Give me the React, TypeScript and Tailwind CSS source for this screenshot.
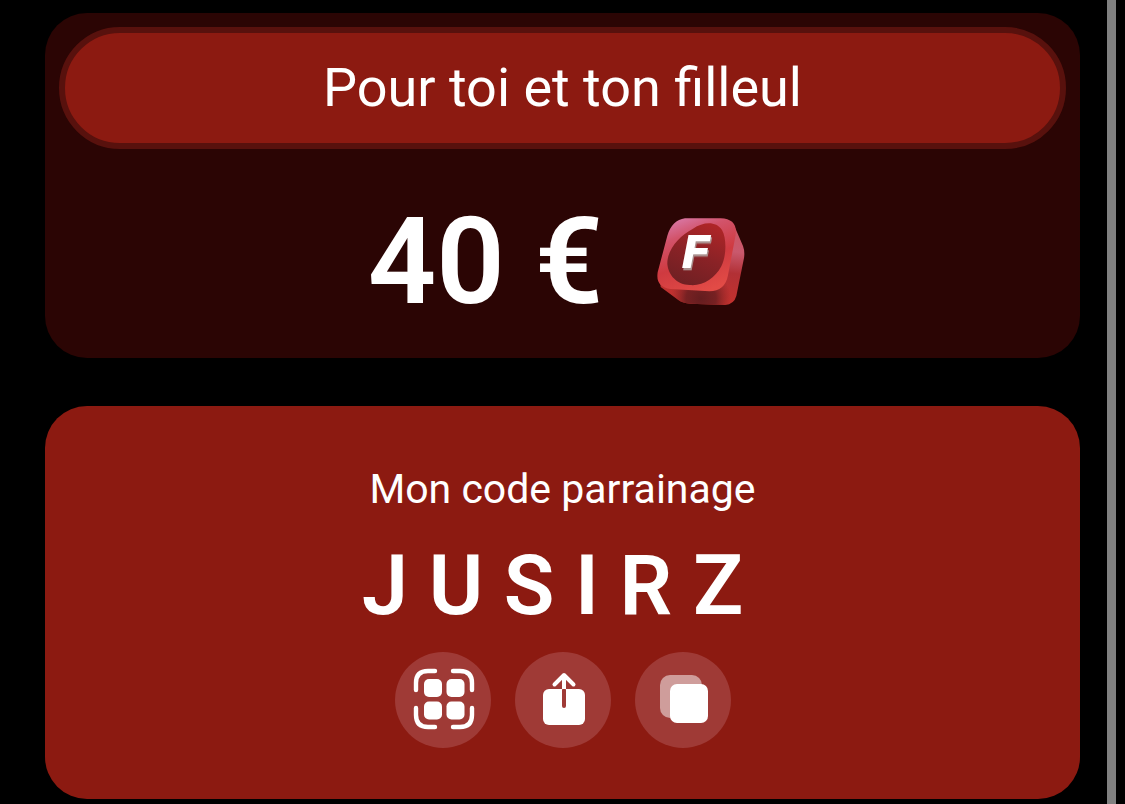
import { useState } from "react";

const CODE = "J U S I R Z";

function CoinCube() {
  return (
    <svg viewBox="53 50 264 264" className="size-[88px] shrink-0" aria-hidden="true">
      <defs>
        <linearGradient id="face" x1="0.2" y1="0" x2="0.6" y2="1">
          <stop offset="0" stopColor="#d97bab" />
          <stop offset="0.25" stopColor="#d2536a" />
          <stop offset="0.6" stopColor="#cf3a40" />
          <stop offset="1" stopColor="#e24b46" />
        </linearGradient>
        <linearGradient id="body" x1="0.6" y1="0" x2="0.5" y2="1">
          <stop offset="0" stopColor="#cf5460" />
          <stop offset="0.35" stopColor="#c9596d" />
          <stop offset="0.6" stopColor="#b23035" />
          <stop offset="1" stopColor="#c5322d" />
        </linearGradient>
        <radialGradient id="shade" gradientUnits="userSpaceOnUse" cx="185" cy="292" r="90">
          <stop offset="0" stopColor="#641d1f" />
          <stop offset="0.5" stopColor="#6f1f21" stopOpacity="0.9" />
          <stop offset="1" stopColor="#8a2526" stopOpacity="0" />
        </radialGradient>
        <linearGradient id="well" x1="0.7" y1="0" x2="0.3" y2="1">
          <stop offset="0" stopColor="#ae2527" />
          <stop offset="0.5" stopColor="#8a2226" />
          <stop offset="1" stopColor="#6f2023" />
        </linearGradient>
      </defs>
      <path d="M252 53 Q280 58 289 83 L311 134 Q317 150 314 170 L291 284 Q284 309 257 311 L153 307 Q130 306 117 296 L64 257 L60 200 Z" fill="url(#body)" />
      <path d="M252 53 Q280 58 289 83 L311 134 Q317 150 314 170 L291 284 Q284 309 257 311 L153 307 Q130 306 117 296 L64 257 L60 200 Z" fill="url(#shade)" />
      <path d="M137 51 L244 51 Q295 53 289 100 L266 222 Q257 270 210 270 L94 263 Q48 257 55 213 L84 103 Q98 57 137 51 Z" fill="url(#face)" />
      <path d="M161 82 C192 62 229 58 248 86 C262 111 262 162 246 195 C226 233 189 255 151 251 C113 250 87 222 84 188 C83 145 119 104 161 82 Z" fill="url(#well)" />
      <text
        x="126"
        y="200"
        fill="white"
        className="font-['DejaVu_Sans',sans-serif] text-[134px] font-bold italic drop-shadow-[3px_7px_0px_#aa908e]"
      >
        F
      </text>
    </svg>
  );
}

function QrIcon() {
  return (
    <svg viewBox="-1 1 60 60" className="size-[60px] overflow-visible" fill="none" aria-hidden="true">
      <path
        d="M2 21 V14 Q2 2 14 2 H21 M39 2 H46 Q58 2 58 14 V21 M58 39 V46 Q58 58 46 58 H39 M21 58 H14 Q2 58 2 46 V39"
        stroke="white"
        strokeWidth="4.4"
        strokeLinecap="round"
      />
      <g fill="white">
        <rect x="10" y="10" width="18" height="18" rx="5" />
        <rect x="32.5" y="10" width="18" height="18" rx="5" />
        <rect x="10" y="32.5" width="18" height="18" rx="5" />
        <rect x="32.5" y="32.5" width="18" height="18" rx="5" />
      </g>
    </svg>
  );
}

function ShareIcon() {
  return (
    <svg viewBox="0 0 60 60" className="size-[60px]" fill="none" aria-hidden="true">
      <rect x="10" y="19" width="42" height="36" rx="6" fill="white" />
      <path d="M31 20 V36" stroke="#9f3a36" strokeWidth="4" strokeLinecap="round" />
      <path d="M31 19 V6" stroke="white" strokeWidth="4" />
      <path d="M21.5 14.5 L31 5 L40.5 14.5" stroke="white" strokeWidth="4" strokeLinecap="round" strokeLinejoin="round" />
    </svg>
  );
}

function CopyIcon() {
  return (
    <svg viewBox="0 0 60 60" className="size-[60px]" fill="none" aria-hidden="true">
      <rect x="7" y="5" width="42" height="43" rx="10" fill="#cf9d9b" />
      <rect x="17" y="14" width="38" height="39" rx="7" fill="white" />
    </svg>
  );
}

const roundButton =
  "flex size-24 items-center justify-center rounded-full bg-[#9f3a36] hover:bg-[#aa4a46]";

export default function App() {
  const [copied, setCopied] = useState(false);

  async function handleCopy() {
    try {
      await navigator.clipboard.writeText(CODE.replaceAll(" ", ""));
      setCopied(true);
    } catch (err) {
      console.error(err);
    }
  }

  return (
    <div className="flex min-h-screen bg-black pr-[9px] font-[Roboto,sans-serif] text-white">
      <main className="flex flex-1 flex-col gap-12 pt-[13px] pr-[27px] pb-[5px] pl-[45px]">

        {/* Reward */}
        <section className="flex flex-col rounded-[42px] bg-[#2b0504] p-[14px] pb-7">
          <h2 className="rounded-full border-6 border-[#58110d] bg-[#8c1a11] py-[23px] text-center text-[54px] leading-[64px] font-normal">
            Pour toi et ton filleul
          </h2>
          <div className="flex items-center justify-center gap-[54px] pt-[45px] pr-3">
            <p className="text-[120px] leading-[136px] font-semibold">40 €</p>
            <CoinCube />
          </div>
        </section>

        {/* Referral code */}
        <section className="flex flex-1 flex-col items-center rounded-[42px] bg-[#8c1a11] px-4 pt-[58px] pb-[51px]">
          <h3 className="text-[41px] leading-[50px] font-normal">Mon code parrainage</h3>
          <p className="pt-6 pr-5 text-[83px] leading-[96px] font-semibold">{CODE}</p>
          <div className="flex gap-6 pt-[18px]">
            <button type="button" aria-label="Afficher le QR code" className={roundButton}>
              <QrIcon />
            </button>
            <button type="button" aria-label="Partager" className={roundButton}>
              <ShareIcon />
            </button>
            <button type="button" aria-label={copied ? "Copié" : "Copier"} onClick={handleCopy} className={roundButton}>
              <CopyIcon />
            </button>
          </div>
        </section>
      </main>

      {/* Scroll track */}
      <div className="w-[9px] shrink-0 bg-[#808080]" />
    </div>
  );
}
